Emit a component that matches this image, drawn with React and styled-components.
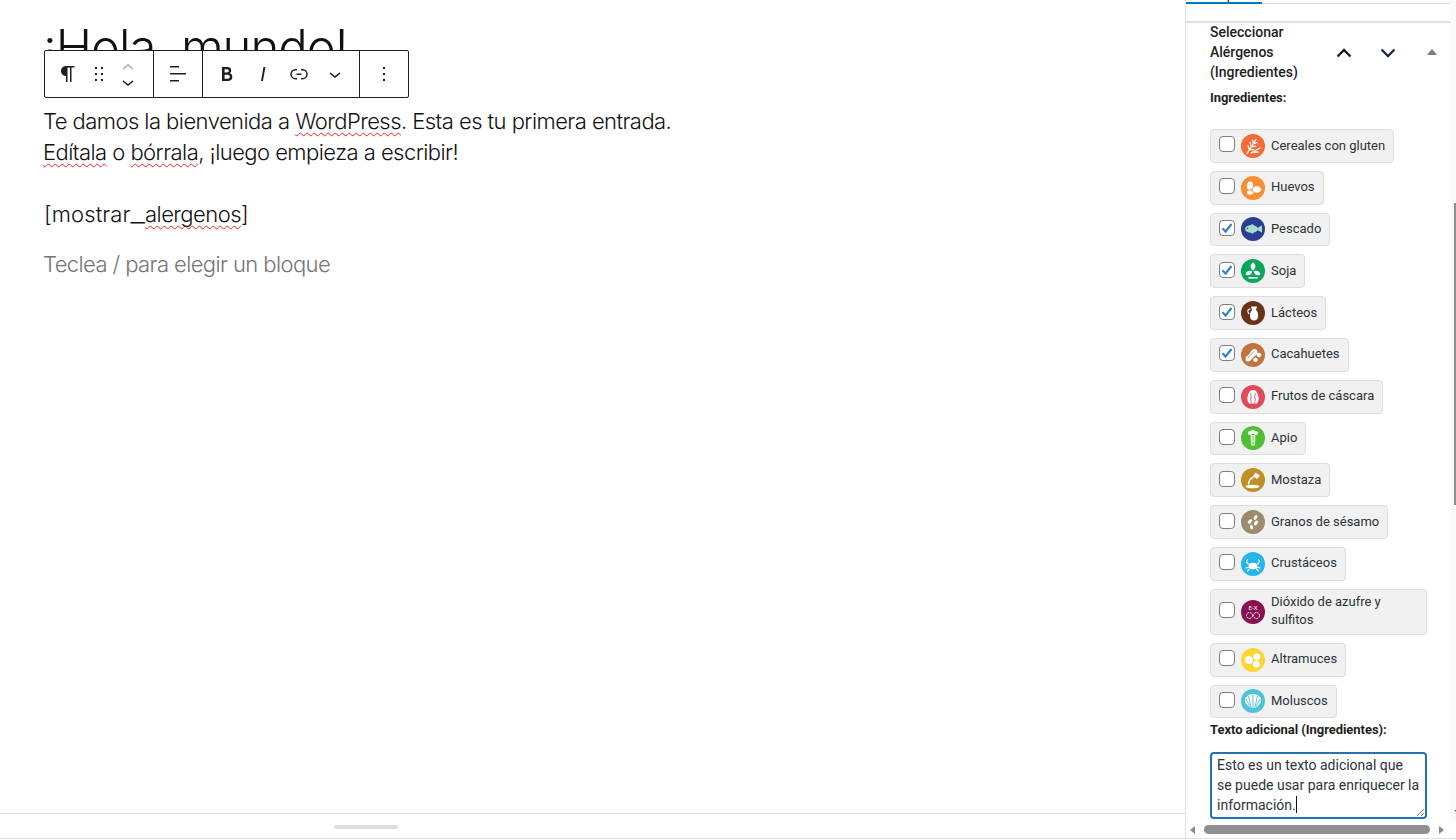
import styled, { createGlobalStyle } from 'styled-components';

const GlobalStyle = createGlobalStyle`
    html, body {
        margin: 0;
        padding: 0;
        background: #fff;
    }
    * {
        box-sizing: border-box;
    }
`;

const Page = styled.div`
    width: 1456px;
    height: 840px;
    display: flex;
    overflow: hidden;
    background: #fff;
    font-family: Roboto, "Liberation Sans", sans-serif;
    color: #1e1e1e;
`;
const Main = styled.div`
    flex: 1;
    min-width: 0;
    height: 839px;
    display: flex;
    flex-direction: column;
    border-bottom: 1px solid #e0e0e0;
`;
const Canvas = styled.div`
    position: relative;
    flex: 1;
    padding: 17px 0 0 43px;
    overflow: hidden;
    font-family: Inter, "Liberation Sans", sans-serif;
    font-weight: 300;
`;
const Title = styled.h1`
    margin: 0 0 28px;
    height: 61px;
    font-size: 49px;
    line-height: 61px;
    font-weight: 300;
    letter-spacing: -1.03px;
    color: #111;
`;
const Paragraph = styled.p`
    margin: 0 0 ${(props) => props.$gap || 0}px;
    height: 31px;
    font-size: 22px;
    line-height: 31px;
    letter-spacing: ${(props) => props.$muted ? '-0.59px' : '-0.55px'};
    color: ${(props) => props.$muted ? '#757575' : '#111'};
`;
const Typo = styled.span`
    text-decoration: underline wavy #e22 1px;
    text-underline-offset: 3px;
    text-decoration-skip-ink: none;
`;
const Roomy = styled.span`
    margin-left: 1px;
    letter-spacing: 0.1px;
`;
const Underscore = styled.span`
    font-size: 33px;
    font-weight: 200;
    line-height: 0;
    letter-spacing: 0;
`;
const Toolbar = styled.div`
    position: absolute;
    left: 44px;
    top: 50px;
    height: 48px;
    display: flex;
    background: #fff;
    border: 1px solid #1e1e1e;
    border-radius: 2px;
`;
const ToolGroup = styled.div`
    width: ${(props) => props.$width}px;
    display: flex;
    align-items: center;
    padding-left: ${(props) => props.$pad}px;
    &:not(:last-child) {
        border-right: 1px solid #1e1e1e;
    }
`;
const ToolButton = styled.div`
    width: ${(props) => props.$width || 36}px;
    height: 46px;
    display: flex;
    align-items: center;
    justify-content: center;
    svg {
        fill: #1e1e1e;
    }
`;
const Movers = styled.div`
    width: 32px;
    margin-top: 2px;
    display: flex;
    flex-direction: column;
    align-items: center;
    svg {
        display: block;
    }
`;
const Footer = styled.div`
    height: 25px;
    flex-shrink: 0;
    display: flex;
    align-items: center;
    padding-left: 334px;
    border-top: 1px solid #e0e0e0;
`;
const Handle = styled.div`
    width: 64px;
    height: 4px;
    margin-top: 1px;
    border-radius: 2px;
    background: #ddd;
`;

const Sidebar = styled.aside`
    position: relative;
    width: 271px;
    height: 839px;
    flex-shrink: 0;
    display: flex;
    flex-direction: column;
    border-left: 1px solid #e0e0e0;
    border-bottom: 1px solid #e0e0e0;
`;
const Tabs = styled.div`
    width: 265px;
    height: 4px;
    flex-shrink: 0;
    overflow: hidden;
    background: linear-gradient(#ddd, #ddd) bottom / 100% 1px no-repeat;
`;
const ActiveTab = styled.div`
    width: 76px;
    height: 16px;
    margin-top: -12px;
    border-bottom: 2px solid #007cba;
    font-size: 13px;
    line-height: 14px;
    text-align: center;
    color: #1e1e1e;
`;
const PanelBody = styled.div`
    flex: 1;
    min-height: 0;
    width: 265px;
    margin-top: 17px;
    padding: 0 0 0 24px;
    border-top: 2px solid #e0e0e0;
    overflow: hidden;
`;
const PanelHeader = styled.div`
    display: flex;
    align-items: center;
    height: 60px;
    margin-top: -1px;
`;
const PanelTitle = styled.div`
    width: 104px;
    flex-shrink: 0;
    font-size: 14px;
    line-height: 20px;
    font-weight: 500;
    color: #1e1e1e;
`;
const HeaderIcon = styled.div`
    width: 44px;
    flex-shrink: 0;
    display: flex;
    justify-content: center;
    margin-top: ${(props) => props.$top ?? 2}px;
    margin-left: ${(props) => props.$left || 0}px;
`;
const FieldLabel = styled.div`
    font-size: 13px;
    line-height: 16px;
    font-weight: 700;
    letter-spacing: -0.05px;
    color: #1e1e1e;
    margin: ${(props) => props.$top}px 0 ${(props) => props.$bottom}px;
`;
const ChipList = styled.div`
    display: flex;
    flex-direction: column;
    align-items: flex-start;
    gap: 8px;
`;
const Chip = styled.label`
    display: flex;
    align-items: center;
    max-width: 217px;
    width: ${(props) => props.$wide ? '217px' : 'auto'};
    min-height: 33.8px;
    padding: 0 8px;
    background: #f1f1f1;
    border: 1px solid #ddd;
    border-radius: 4px;
`;
const CheckBox = styled.span`
    width: 16px;
    height: 16px;
    flex-shrink: 0;
    margin-top: -3px;
    background: #fff;
    border: 1.5px solid #7e7e7e;
    border-radius: 4px;
    display: flex;
    align-items: center;
    justify-content: center;
`;
const Badge = styled.span`
    width: 24px;
    height: 24px;
    flex-shrink: 0;
    margin: 0 6px;
    border-radius: 50%;
    background: ${(props) => props.$color};
    svg {
        display: block;
    }
`;
const ChipText = styled.span`
    margin: 3.6px 0 4.4px;
    font-size: 13px;
    line-height: 18px;
    color: #2c3338;
`;
const TextBox = styled.div`
    position: relative;
    width: 217px;
    height: 67px;
    padding: 1px 5px 0 5px;
    border: 2px solid #2271b1;
    border-radius: 4px;
    font-size: 14px;
    line-height: 20px;
    color: #2c3338;
`;
const Caret = styled.span`
    display: inline-block;
    width: 1px;
    height: 17px;
    vertical-align: -3px;
    background: #111;
`;
const Grip = styled.svg`
    position: absolute;
    right: 0;
    bottom: 0;
`;
const HScroll = styled.div`
    height: 17px;
    width: 269px;
    flex-shrink: 0;
    display: flex;
    align-items: center;
    padding: 0 9px 0 4px;
    background: #fff;
`;
const ArrowH = styled.span`
    width: 0;
    height: 0;
    border-top: 4px solid transparent;
    border-bottom: 4px solid transparent;
    ${(props) => props.$right
        ? 'border-left: 5px solid #8a8a8a; margin-left: 9px;'
        : 'border-right: 5px solid #8a8a8a; margin-right: 9px;'}
`;
const HThumb = styled.div`
    width: 226px;
    height: 9px;
    border-radius: 5px;
    background: #8f8f8f;
`;
const VTrack = styled.div`
    position: absolute;
    top: 0;
    right: 0;
    bottom: 17px;
    width: 5px;
    background: #fafafa;
`;
const VThumb = styled.div`
    position: absolute;
    top: 203px;
    right: 0;
    width: 2px;
    height: 302px;
    background: #8f8f8f;
`;
const VArrow = styled.div`
    position: absolute;
    right: 0;
    bottom: 9px;
    width: 0;
    height: 0;
    border-left: 2px solid transparent;
    border-top: 2px solid #777;
`;

function Glyph({ children, ...rest }) {
    return <svg width="24" height="24" viewBox="0 0 24 24" {...rest}>{children}</svg>;
}

const allergens = [
    {
        name: 'Cereales con gluten',
        color: '#f26c36',
        icon: (
            <g stroke="#fff" strokeWidth="1.3" fill="none" strokeLinecap="round">
                <path d="M6 19.500L15 5.500" />
                <path d="M8.500 15.500l-1.500-3.500M10.500 12.500l-1.500-4M12.500 9.500l-1-3.500M8.500 15.500l4 .2M10.500 12.500l4-.2M12.500 9.500l3.500-.8" />
                <path d="M10 19l9-5M12.500 18.500l4.500-.5" />
            </g>
        ),
    },
    {
        name: 'Huevos',
        color: '#f78e2f',
        icon: (
            <g fill="#fff" stroke="#f78e2f" strokeWidth="1">
                <ellipse cx="9" cy="10" rx="3.800" ry="5" />
                <ellipse cx="9" cy="16.500" rx="3.800" ry="2.800" />
                <ellipse cx="15.800" cy="13.500" rx="4.800" ry="3.800" />
            </g>
        ),
    },
    {
        name: 'Pescado',
        color: '#2a3f94',
        checked: true,
        icon: (
            <g fill="#a9dccb">
                <ellipse cx="10.500" cy="12" rx="6.500" ry="3.800" />
                <path d="M15 12l6-3.800v7.600z" />
                <path d="M8 8.500l4-1.500 1 2zM9 15.500l3 1.500 .5-2z" />
                <circle cx="6.500" cy="11.500" r=".7" fill="#2a3f94" />
            </g>
        ),
    },
    {
        name: 'Soja',
        color: '#0aa65b',
        checked: true,
        icon: (
            <g fill="#fff">
                <path d="M12 3.500c3.200 2.200 3.200 5.200 0 8c-3.200-2.800-3.200-5.800 0-8z" />
                <path d="M11.300 12.200c-.8 3.300-3 4.600-6.800 3.600c.6-3.300 3.200-4.800 6.800-3.600z" />
                <path d="M12.700 12.200c.8 3.300 3 4.600 6.800 3.600c-.6-3.300-3.200-4.800-6.800-3.600z" />
                <rect x="7.500" y="18" width="9" height="1.600" />
            </g>
        ),
    },
    {
        name: 'Lácteos',
        color: '#68331a',
        checked: true,
        icon: (
            <g fill="#fff">
                <path d="M10 5.500h6l-1 3.500c2 2 2.500 4 2 7c-.5 2.500-2 3.500-4 3.500s-3.500-1-4-3.500c-.5-3 .5-5 2-7z" />
                <path d="M9.500 8c-2 0-3 1-2.500 3l1 2" fill="none" stroke="#fff" strokeWidth="1.200" />
            </g>
        ),
    },
    {
        name: 'Cacahuetes',
        color: '#c2733f',
        checked: true,
        icon: (
            <g>
                <path fill="#fff" d="M4.500 15.500c0-2 2-2.500 3.500-4S10.500 6 13.500 6s3.500 3 2.500 5s-3 2-4.500 4s-2.500 3.500-4.500 3.500S4.500 17.500 4.500 15.500z" />
                <path fill="none" stroke="#c2733f" strokeWidth=".8" d="M7 14.500c1.500-1 3-3 6-6" />
                <circle cx="18" cy="12" r="2.300" fill="#fff" />
                <circle cx="14.500" cy="16.800" r="2.200" fill="#fff" />
            </g>
        ),
    },
    {
        name: 'Frutos de cáscara',
        color: '#e04a5b',
        icon: (
            <g>
                <path fill="#fff" d="M12 5c3 0 4 2 5 5s1 6-1 8.500H8c-2-2.500-2-5.500-1-8.500s2-5 5-5z" />
                <path fill="none" stroke="#e04a5b" strokeWidth=".9" d="M10 8c-1 2 1 3 0 5s1 3 0 5M14 8c1 2-1 3 0 5s-1 3 0 5" />
            </g>
        ),
    },
    {
        name: 'Apio',
        color: '#4ec033',
        icon: (
            <g>
                <circle cx="9" cy="7" r="2" fill="#fff" />
                <circle cx="15" cy="7" r="2" fill="#fff" />
                <circle cx="12" cy="6" r="2.300" fill="#fff" />
                <path fill="none" stroke="#fff" strokeWidth="1.200" d="M10.300 9l.3 9c0 1.500 2.800 1.500 2.800 0l.3-9" />
                <path fill="#fff" d="M11.500 9h1v8h-1z" />
            </g>
        ),
    },
    {
        name: 'Mostaza',
        color: '#bf8f23',
        icon: (
            <g fill="#fff">
                <path d="M14.500 4.500l4.500 3-3 3.500-4-3z" />
                <path d="M12.500 9c-3 1.500-5 3.500-5 7.500" fill="none" stroke="#fff" strokeWidth="1.500" />
                <ellipse cx="11.500" cy="18.500" rx="7" ry="1.800" />
            </g>
        ),
    },
    {
        name: 'Granos de sésamo',
        color: '#9c8c6c',
        icon: (
            <g fill="#fff">
                <ellipse cx="14.500" cy="7.500" rx="1.600" ry="2.600" transform="rotate(30 14.500 7.500)" />
                <ellipse cx="9" cy="11.500" rx="1.600" ry="2.600" transform="rotate(50 9 11.500)" />
                <ellipse cx="15" cy="13" rx="1.600" ry="2.600" transform="rotate(35 15 13)" />
                <ellipse cx="10.500" cy="17" rx="1.600" ry="2.400" transform="rotate(-20 10.500 17)" />
            </g>
        ),
    },
    {
        name: 'Crustáceos',
        color: '#26b5ea',
        icon: (
            <g fill="#fff" stroke="#fff" strokeLinecap="round">
                <ellipse cx="12" cy="14" rx="4.300" ry="3.200" strokeWidth="0" />
                <path d="M7.500 12c-2-1-2.500-3-1-4.500M16.500 12c2-1 2.500-3 1-4.500M8 15l-3 1M8.500 17l-2 2M16 15l3 1M15.500 17l2 2" fill="none" strokeWidth="1.100" />
            </g>
        ),
    },
    {
        name: 'Dióxido de azufre y sulfitos',
        color: '#8a0f50',
        wide: true,
        icon: (
            <g fill="none" stroke="#fff" strokeWidth="1">
                <text x="12" y="10" textAnchor="middle" fontSize="6" fill="#fff" stroke="none" fontFamily="Roboto">E-X</text>
                <circle cx="8.500" cy="15.500" r="3" strokeDasharray="2 .8" />
                <circle cx="15.500" cy="15.500" r="3" strokeDasharray="2 .8" />
            </g>
        ),
    },
    {
        name: 'Altramuces',
        color: '#fcd634',
        icon: (
            <g fill="#fff">
                <circle cx="8" cy="12" r="3.900" />
                <circle cx="15.800" cy="8.800" r="3.400" />
                <circle cx="15.300" cy="16.200" r="3.400" />
            </g>
        ),
    },
    {
        name: 'Moluscos',
        color: '#4dc3d7',
        icon: (
            <g>
                <path fill="#fff" d="M12 5c5 0 8 3 8 6.500c0 3-3 5.500-5 7h-6c-2-1.500-5-4-5-7C4 8 7 5 12 5z" />
                <path stroke="#4dc3d7" strokeWidth=".9" fill="none" d="M12 18V6M10 18L7.500 7M14 18l2.500-11M9 18l-4-8M15 18l4-8" />
            </g>
        ),
    },
];

function App() {
    return (
        <>
            <GlobalStyle />
            <Page>
                <Main>
                    <Canvas>
                        <Title>¡Hola, mundo!</Title>
                        <Paragraph>Te damos la bienvenida a <Typo>WordPress</Typo>. Esta es tu primera entrada.</Paragraph>
                        <Paragraph $gap={31}><Typo>Edítala</Typo> o <Typo>bórrala</Typo>, ¡luego empieza a escribir!</Paragraph>
                        <Paragraph $gap={19}><Roomy>[mostrar</Roomy><Underscore>_</Underscore><Typo>alergenos</Typo>]</Paragraph>
                        <Paragraph $muted>Teclea / para elegir un bloque</Paragraph>
                        <Toolbar>
                            <ToolGroup $width={109} $pad={5}>
                                <ToolButton>
                                    <Glyph><path d="m9.99609 14v-.2251l.00391.0001v6.225h1.5v-14.5h2.5v14.5h1.5v-14.5h3v-1.5h-8.50391c-2.76142 0-5 2.23858-5 5 0 2.7614 2.23858 5 5 5z" /></Glyph>
                                </ToolButton>
                                <ToolButton $width={26}>
                                    <Glyph><path d="M8 7h2V5H8v2zm0 6h2v-2H8v2zm0 6h2v-2H8v2zm6-14v2h2V5h-2zm0 8h2v-2h-2v2zm0 6h2v-2h-2v2z" /></Glyph>
                                </ToolButton>
                                <Movers>
                                    <svg width="24" height="16" viewBox="0 3 24 16" fill="#aaa"><path d="M6.5 12.400L12 8l5.500 4.400-.9 1.200L12 10l-4.500 3.600-1-1.200z" /></svg>
                                    <svg width="24" height="16" viewBox="0 5 24 16" fill="#1e1e1e"><path d="M17.500 11.600L12 16l-5.500-4.400.9-1.200L12 14l4.500-3.600 1 1.200z" /></svg>
                                </Movers>
                            </ToolGroup>
                            <ToolGroup $width={49} $pad={6}>
                                <ToolButton>
                                    <Glyph><path d="M13 5.500H4V4h9v1.500Zm7 7H4V11h16v1.500Zm-7 7H4V18h9v1.500Z" /></Glyph>
                                </ToolButton>
                            </ToolGroup>
                            <ToolGroup $width={157} $pad={6}>
                                <ToolButton>
                                    <Glyph><path d="M14.700 11.300c1-.6 1.500-1.600 1.500-3 0-2.300-1.300-3.400-4-3.400H7v14h5.800c1.400 0 2.500-.3 3.300-1 .8-.7 1.200-1.700 1.200-2.900.1-1.900-.8-3.100-2.600-3.700zm-5.100-4h2.300c.6 0 1.100.1 1.400.4.3.3.5.7.5 1.200s-.2 1-.5 1.200c-.3.3-.8.4-1.400.4H9.600V7.300zm4.600 9c-.4.3-1 .4-1.700.4H9.600v-3.900h2.900c.7 0 1.300.2 1.700.5.4.3.6.8.6 1.500s-.2 1.200-.6 1.500z" /></Glyph>
                                </ToolButton>
                                <ToolButton>
                                    <Glyph><path d="M12.500 5L10 19h1.900l2.500-14z" /></Glyph>
                                </ToolButton>
                                <ToolButton>
                                    <Glyph><path d="M10 17.389H8.444A5.194 5.194 0 1 1 8.444 7H10v1.500H8.444a3.694 3.694 0 0 0 0 7.389H10v1.500ZM14 7h1.556a5.194 5.194 0 0 1 0 10.390H14v-1.500h1.556a3.694 3.694 0 0 0 0-7.390H14V7Zm-4.500 6h5v-1.500h-5V13Z" /></Glyph>
                                </ToolButton>
                                <ToolButton>
                                    <Glyph><path d="M17.500 11.600L12 16l-5.500-4.400.9-1.200L12 14l4.500-3.600 1 1.200z" /></Glyph>
                                </ToolButton>
                            </ToolGroup>
                            <ToolGroup $width={48} $pad={6}>
                                <ToolButton>
                                    <Glyph><path d="M13 19h-2v-2h2v2zm0-6h-2v-2h2v2zm0-6h-2V5h2v2z" /></Glyph>
                                </ToolButton>
                            </ToolGroup>
                        </Toolbar>
                    </Canvas>
                    <Footer><Handle /></Footer>
                </Main>
                <Sidebar>
                    <Tabs><ActiveTab>Bloque</ActiveTab></Tabs>
                    <PanelBody>
                        <PanelHeader>
                            <PanelTitle>Seleccionar Alérgenos (Ingredientes)</PanelTitle>
                            <HeaderIcon $left={8}>
                                <svg width="16" height="10" viewBox="0 0 16 10" fill="none" stroke="#1e1e1e" strokeWidth="2.300"><path d="M1.500 8.500L8 2l6.500 6.500" /></svg>
                            </HeaderIcon>
                            <HeaderIcon>
                                <svg width="16" height="10" viewBox="0 0 16 10" fill="none" stroke="#1d2b45" strokeWidth="2.300"><path d="M1.500 1.500L8 8l6.500-6.500" /></svg>
                            </HeaderIcon>
                            <HeaderIcon $top={0}>
                                <svg width="10" height="6" viewBox="0 0 10 6" fill="#787c82"><path d="M5 0l5 6H0z" /></svg>
                            </HeaderIcon>
                        </PanelHeader>
                        <FieldLabel $top={8} $bottom={23}>Ingredientes:</FieldLabel>
                        <ChipList>
                            {allergens.map((item) => (
                                <Chip key={item.name} $wide={item.wide}>
                                    <CheckBox>
                                        {item.checked && (
                                            <svg width="14" height="14" viewBox="0 0 14 14" fill="none" stroke="#3582c4" strokeWidth="2.200"><path d="M2.500 7.200L5.600 10.500L11.500 3" /></svg>
                                        )}
                                    </CheckBox>
                                    <Badge $color={item.color}><Glyph>{item.icon}</Glyph></Badge>
                                    <ChipText>{item.name}</ChipText>
                                </Chip>
                            ))}
                        </ChipList>
                        <FieldLabel $top={4} $bottom={14}>Texto adicional (Ingredientes):</FieldLabel>
                        <TextBox>
                            Esto es un texto adicional que se puede usar para enriquecer la información.<Caret />
                            <Grip width="9" height="9" viewBox="0 0 9 9" stroke="#777" strokeWidth="1"><path d="M1 8l7-7M5 8l3-3" /></Grip>
                        </TextBox>
                    </PanelBody>
                    <HScroll>
                        <ArrowH />
                        <HThumb />
                        <ArrowH $right />
                    </HScroll>
                    <VTrack><VThumb /><VArrow /></VTrack>
                </Sidebar>
            </Page>
        </>
    );
}

export default App;
